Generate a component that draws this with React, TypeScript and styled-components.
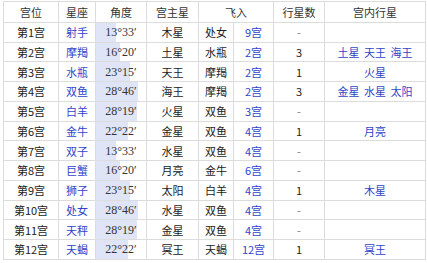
import React from "react";
import styled, { createGlobalStyle } from "styled-components";

const Global = createGlobalStyle`
  html, body { margin: 0; padding: 0; background: #fff; }
  body { font-family: "Noto Sans CJK SC", "Noto Sans", sans-serif; }
`;

const Wrap = styled.div`
  padding: 1px 0 0 3px;
`;

const Table = styled.table`
  border-collapse: collapse;
  table-layout: fixed;
  width: 422px;
  font-size: 11px;
  color: #222;
`;

const Col = styled.col<{ $w: number }>`
  width: ${(p) => p.$w}px;
`;

const Row = styled.tr`
  height: 19.75px;
`;

const Th = styled.th`
  border: 1px solid #dcdcdc;
  font-weight: normal;
  color: #333;
  text-align: center;
  padding: 0;
  height: 19.75px;
  line-height: 14px;
`;

const Td = styled.td<{ $tone?: "link" | "muted" }>`
  border: 1px solid #dcdcdc;
  text-align: center;
  padding: 0;
  line-height: 14px;
  white-space: nowrap;
  color: ${(p) => (p.$tone === "link" ? "#2f45c9" : p.$tone === "muted" ? "#777" : "#222")};
`;

const AngleTd = styled(Td)<{ $w: number }>`
  font-family: "Liberation Serif", "DejaVu Serif", serif;
  font-size: 12px;
  color: #333;
  background-image: linear-gradient(#dfe4f7, #dfe4f7);
  background-repeat: no-repeat;
  background-size: ${(p) => p.$w}px 100%;
  background-position: left top;
`;

type R = [string, string, string, string, string, string, string, string];

const rows: R[] = [
  ["第1宫", "射手", "13°33′", "木星", "处女", "9宫", "-", ""],
  ["第2宫", "摩羯", "16°20′", "土星", "水瓶", "2宫", "3", "土星 天王 海王"],
  ["第3宫", "水瓶", "23°15′", "天王", "摩羯", "2宫", "1", "火星"],
  ["第4宫", "双鱼", "28°46′", "海王", "摩羯", "2宫", "3", "金星 水星 太阳"],
  ["第5宫", "白羊", "28°19′", "火星", "双鱼", "3宫", "-", ""],
  ["第6宫", "金牛", "22°22′", "金星", "双鱼", "4宫", "1", "月亮"],
  ["第7宫", "双子", "13°33′", "水星", "双鱼", "4宫", "-", ""],
  ["第8宫", "巨蟹", "16°20′", "月亮", "金牛", "6宫", "-", ""],
  ["第9宫", "狮子", "23°15′", "太阳", "白羊", "4宫", "1", "木星"],
  ["第10宫", "处女", "28°46′", "水星", "双鱼", "4宫", "-", ""],
  ["第11宫", "天秤", "28°19′", "金星", "双鱼", "4宫", "-", ""],
  ["第12宫", "天蝎", "22°22′", "冥王", "天蝎", "12宫", "1", "冥王"],
];

function barWidth(angle: string): number {
  const m = angle.match(/(\d+)°(\d+)/);
  if (!m) return 0;
  const deg = parseInt(m[1], 10) + parseInt(m[2], 10) / 60;
  return Math.round(deg * 1.45);
}

const Planets = styled.span`
  word-spacing: 2px;
`;

export default function App() {
  return (
    <>
      <Global />
      <Wrap>
        <Table>
          <colgroup>
            <Col $w={55} />
            <Col $w={37} />
            <Col $w={51} />
            <Col $w={52} />
            <Col $w={35} />
            <Col $w={40} />
            <Col $w={51} />
            <Col $w={101} />
          </colgroup>
          <thead>
            <Row>
              <Th>宫位</Th>
              <Th>星座</Th>
              <Th>角度</Th>
              <Th>宫主星</Th>
              <Th colSpan={2}>飞入</Th>
              <Th>行星数</Th>
              <Th>宫内行星</Th>
            </Row>
          </thead>
          <tbody>
            {rows.map((r) => (
              <Row key={r[0]}>
                <Td>{r[0]}</Td>
                <Td $tone="link">{r[1]}</Td>
                <AngleTd $w={barWidth(r[2])}>{r[2]}</AngleTd>
                <Td>{r[3]}</Td>
                <Td>{r[4]}</Td>
                <Td $tone="link">{r[5]}</Td>
                <Td $tone={r[6] === "-" ? "muted" : undefined}>{r[6]}</Td>
                <Td $tone="link">
                  <Planets>{r[7]}</Planets>
                </Td>
              </Row>
            ))}
          </tbody>
        </Table>
      </Wrap>
    </>
  );
}
